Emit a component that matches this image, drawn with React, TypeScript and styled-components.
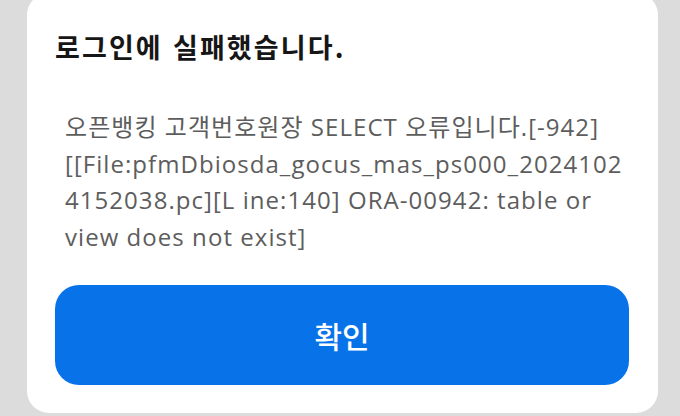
import React from "react";
import styled, { createGlobalStyle } from "styled-components";

const GlobalStyle = createGlobalStyle`
  html, body {
    margin: 0;
    padding: 0;
    background: #dcdcdc;
    overflow: hidden;
  }
  body {
    font-family: "Noto Sans CJK KR", "Noto Sans", sans-serif;
  }
`;

const App = () => {
  return (
    <PageS>
      <GlobalStyle />
      <CardS>
        <TitleS>로그인에 실패했습니다.</TitleS>
        <MessageS>
          오픈뱅킹 고객번호원장 SELECT 오류입니다.[-942]
          <br />
          [[File:pfmDbiosda_gocus_mas_ps000_2024102
          <br />
          4152038.pc][L ine:140] ORA-00942: table or
          <br />
          view does not exist]
        </MessageS>
        <ConfirmButtonS>확인</ConfirmButtonS>
      </CardS>
    </PageS>
  );
};

//style-----------------------------------------
const PageS = styled.div`
  width: 680px;
  height: 416px;
  padding: 0 22px 3px 27px;
  box-sizing: border-box;
  display: flex;
  flex-direction: column;
  justify-content: flex-end;
  overflow: hidden;
`;
const CardS = styled.div`
  flex: none;
  width: 631px;
  height: 420px;
  box-sizing: border-box;
  background: #ffffff;
  border-radius: 22px;
  padding: 36px 29px 28px 28px;
  display: flex;
  flex-direction: column;
`;
const TitleS = styled.div`
  font-size: 27px;
  font-weight: 700;
  line-height: 36px;
  color: #161616;
  letter-spacing: 2.1px;
  word-spacing: 2px;
`;
const MessageS = styled.div`
  margin-top: 44px;
  padding-left: 10px;
  font-family: "Open Sans", "Noto Sans CJK KR", sans-serif;
  font-size: 24px;
  line-height: 36.5px;
  letter-spacing: 1.05px;
  color: #5d5d5d;
  white-space: nowrap;
`;
const ConfirmButtonS = styled.button`
  margin-top: auto;
  height: 100px;
  border: none;
  outline: none;
  appearance: none;
  border-radius: 24px;
  background: #0873e9;
  color: #ffffff;
  font-family: "Noto Sans CJK KR", "Noto Sans", sans-serif;
  font-size: 30px;
  font-weight: 500;
  cursor: pointer;
`;
export default App;
